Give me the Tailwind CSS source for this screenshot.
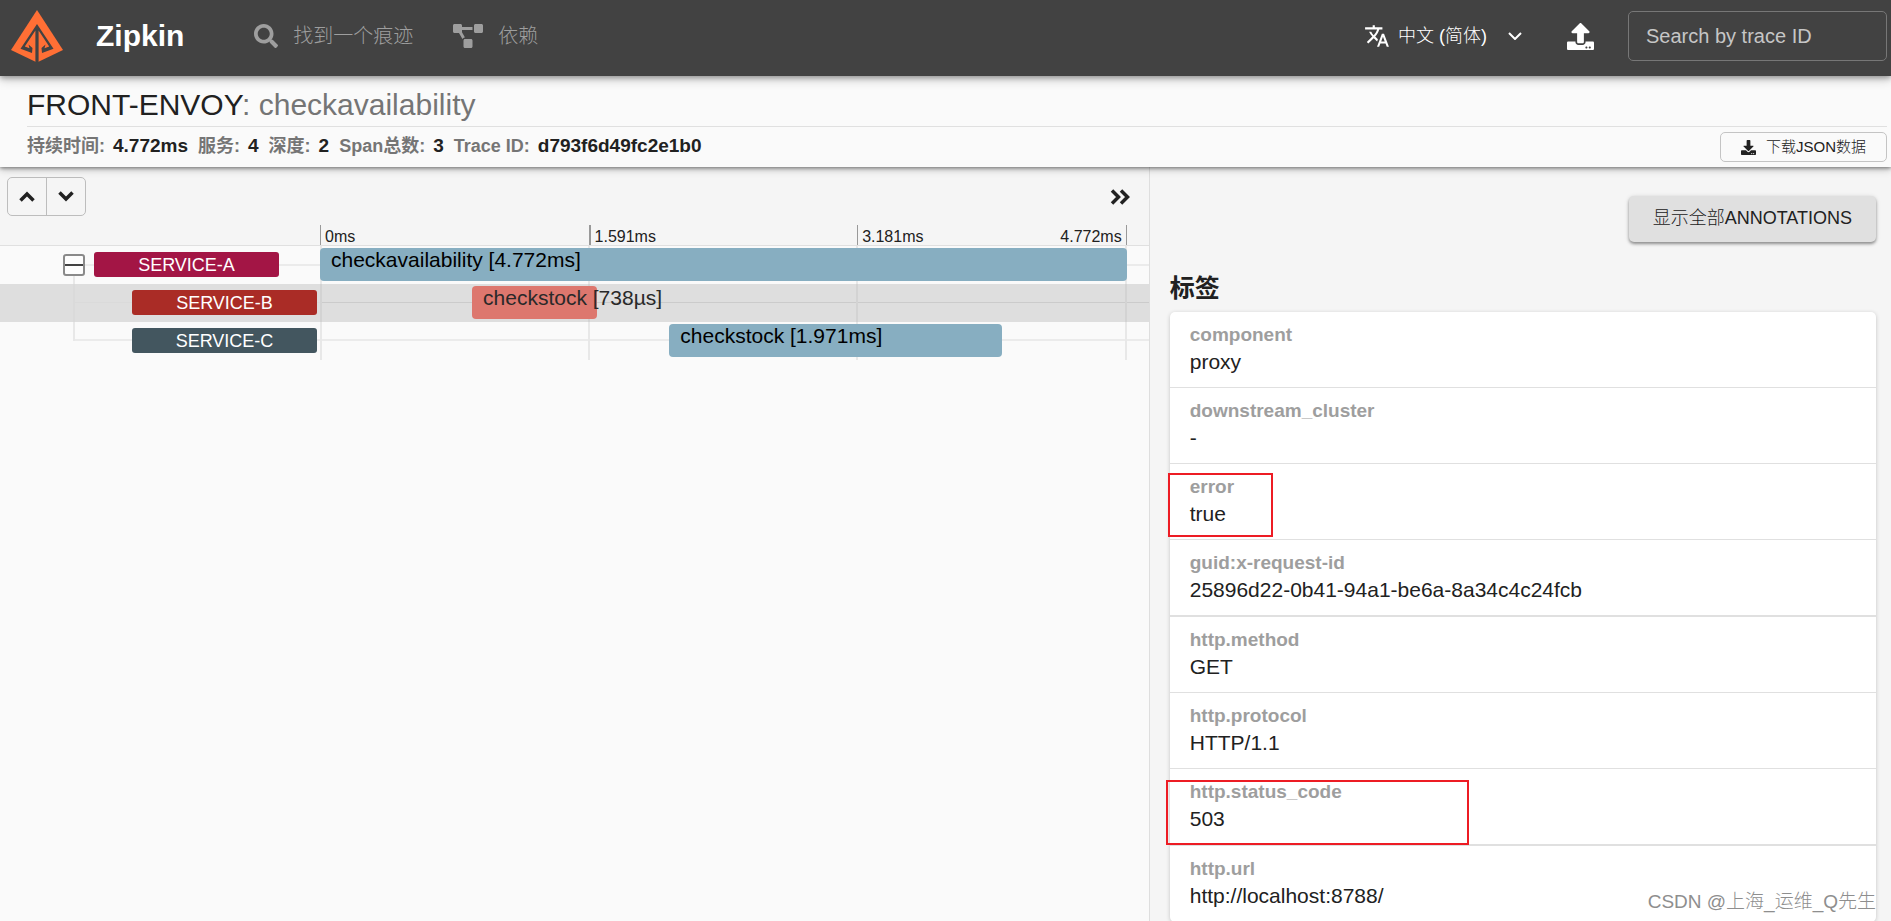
<!DOCTYPE html>
<html lang="zh-CN">
<head>
<meta charset="utf-8">
<title>Zipkin</title>
<script src="https://cdn.jsdelivr.net/npm/@tailwindcss/browser@4"></script>
</head>
<body class="flex h-screen flex-col overflow-hidden bg-[#fafafa] font-['Liberation_Sans','Noto_Sans_CJK_SC',sans-serif] text-[#212121]">

<header class="relative z-20 flex h-[76px] shrink-0 items-center bg-[#424242] pr-1 pb-1 pl-[11px] shadow-[0_2px_5px_rgba(0,0,0,0.3),0_4px_10px_rgba(0,0,0,0.18)]">
  <a href="#" class="flex items-center text-white">
    <svg class="h-[52px] w-[52px]" viewBox="0 0 52 52" aria-hidden="true">
      <path fill="#ff6f35" d="M26 0 52 40 27 52H25L0 40Z"/>
      <path fill="#424242" d="M26 14 9.500 38.800 21 43 21.500 38 17.500 34.500 18.500 38.200 13.800 36.600 24.400 20.500V52H27.600V20.500L38.200 36.600 33.500 38.200 34.500 34.500 30.500 38 31 43 42.500 38.800Z"/>
    </svg>
    <span class="ml-[33px] text-[30px] leading-9 font-bold">Zipkin</span>
  </a>
  <nav class="ml-[70px] flex items-center text-xl leading-7 font-light text-[#9e9e9e]">
    <a href="#" class="flex items-center gap-[15px]">
      <svg class="h-6 w-6" viewBox="0 0 512 512" fill="currentColor" aria-hidden="true"><path d="M505 442.700 405.300 343c-4.500-4.500-10.600-7-17-7H372c27.600-35.300 44-79.700 44-128C416 93.100 322.900 0 208 0S0 93.100 0 208s93.100 208 208 208c48.300 0 92.700-16.400 128-44v16.300c0 6.400 2.500 12.500 7 17l99.700 99.700c9.400 9.400 24.600 9.400 33.900 0l28.300-28.300c9.400-9.400 9.400-24.600.1-34zM208 336c-70.700 0-128-57.200-128-128 0-70.700 57.200-128 128-128 70.700 0 128 57.200 128 128 0 70.700-57.200 128-128 128z"/></svg>
      <span>找到一个痕迹</span>
    </a>
    <a href="#" class="ml-10 flex items-center gap-[15px]">
      <svg class="h-6 w-[30px]" viewBox="0 0 640 512" fill="currentColor" aria-hidden="true"><path d="M384 320H256c-17.700 0-32 14.300-32 32v128c0 17.700 14.300 32 32 32h128c17.700 0 32-14.300 32-32V352c0-17.700-14.300-32-32-32zM192 32c0-17.700-14.300-32-32-32H32C14.300 0 0 14.300 0 32v128c0 17.700 14.300 32 32 32h95.700l73.200 128C212 301 232.400 288 256 288h.3L192 175.500V128h224V64H192V32zM608 0H480c-17.700 0-32 14.300-32 32v128c0 17.700 14.300 32 32 32h128c17.700 0 32-14.300 32-32V32c0-17.700-14.300-32-32-32z"/></svg>
      <span>依赖</span>
    </a>
  </nav>
  <div class="ml-auto flex items-center text-white">
    <svg class="h-[26px] w-[26px]" viewBox="0 0 24 24" fill="currentColor" aria-hidden="true"><path d="M12.870 15.070l-2.540-2.510.03-.03c1.740-1.940 2.980-4.170 3.710-6.530H17V4h-7V2H8v2H1v1.990h11.170C11.500 7.920 10.440 9.750 9 11.350 8.070 10.320 7.300 9.190 6.690 8h-2c.73 1.630 1.730 3.170 2.980 4.560l-5.090 5.020L4 19l5-5 3.110 3.110.76-2.040zM18.500 10h-2L12 22h2l1.120-3h4.750L21 22h2l-4.500-12zm-2.620 7l1.620-4.330L19.120 17h-3.240z"/></svg>
    <div class="relative ml-2">
      <select aria-label="语言" class="h-8 w-[124px] appearance-none bg-transparent pr-6 text-lg leading-8 font-light outline-none"><option>中文 (简体)</option></select>
      <svg class="pointer-events-none absolute top-3 right-0 h-2 w-[14px]" viewBox="0 0 14 8" fill="none" stroke="currentColor" stroke-width="2" aria-hidden="true"><path d="M1 1l6 6 6-6"/></svg>
    </div>
    <button type="button" aria-label="上传" class="ml-[45px]">
      <svg class="h-[27px] w-[27px]" viewBox="0 0 512 512" fill="currentColor" aria-hidden="true"><path d="M296 384h-80c-13.300 0-24-10.700-24-24V192h-87.700c-17.800 0-26.700-21.500-14.100-34.100L242.300 5.700c7.500-7.500 19.800-7.500 27.300 0l152.200 152.200c12.600 12.600 3.700 34.100-14.100 34.100H320v168c0 13.300-10.700 24-24 24zm216-8v112c0 13.300-10.700 24-24 24H24c-13.300 0-24-10.700-24-24V376c0-13.300 10.700-24 24-24h136v8c0 30.900 25.100 56 56 56h80c30.900 0 56-25.100 56-56v-8h136c13.300 0 24 10.700 24 24zm-124 88c0-11-9-20-20-20s-20 9-20 20 9 20 20 20 20-9 20-20zm64 0c0-11-9-20-20-20s-20 9-20 20 9 20 20 20 20-9 20-20z"/></svg>
    </button>
    <input type="text" aria-label="Search by trace ID" placeholder="Search by trace ID" class="ml-[34px] h-[50px] w-[259px] rounded-[5px] border border-[#777] bg-transparent px-[17px] text-xl placeholder:text-[#c6c6c6]">
  </div>
</header>

<section class="relative z-10 shrink-0 bg-[#fafafa] pt-[11px] pr-1 pl-[27px] shadow-[0_1px_4px_rgba(0,0,0,0.5),0_3px_8px_rgba(0,0,0,0.16)]">
  <h1 class="h-[39px] text-[30px] leading-9">FRONT-ENVOY<span class="text-[#757575]">: checkavailability</span></h1>
  <div class="flex h-[41px] items-center justify-between border-t border-[#e0e0e0]">
    <dl class="flex gap-[10px] pb-[3px] text-lg leading-6 font-bold text-[#757575]">
      <div class="flex gap-2"><dt>持续时间:</dt><dd class="text-[19px] text-[#212121]">4.772ms</dd></div>
      <div class="flex gap-2"><dt>服务:</dt><dd class="text-[19px] text-[#212121]">4</dd></div>
      <div class="flex gap-2"><dt>深度:</dt><dd class="text-[19px] text-[#212121]">2</dd></div>
      <div class="flex gap-2"><dt>Span总数:</dt><dd class="text-[19px] text-[#212121]">3</dd></div>
      <div class="flex gap-2"><dt>Trace ID:</dt><dd class="text-[19px] text-[#212121]">d793f6d49fc2e1b0</dd></div>
    </dl>
    <button type="button" class="flex h-[30px] items-center gap-[10px] rounded-[5px] border border-[#c4c4c4] px-5 text-[15px] leading-5 font-light">
      <svg class="h-[15px] w-[15px]" viewBox="0 0 512 512" fill="currentColor" aria-hidden="true"><path d="M216 0h80c13.300 0 24 10.700 24 24v168h87.700c17.800 0 26.700 21.500 14.100 34.100L269.700 378.300c-7.500 7.500-19.800 7.500-27.300 0L90.100 226.100c-12.600-12.600-3.700-34.100 14.100-34.100H192V24c0-13.300 10.700-24 24-24zm296 376v112c0 13.300-10.700 24-24 24H24c-13.300 0-24-10.700-24-24V376c0-13.300 10.700-24 24-24h146.700l49 49c20.100 20.100 52.500 20.100 72.600 0l49-49H488c13.300 0 24 10.700 24 24zm-124 88c0-11-9-20-20-20s-20 9-20 20 9 20 20 20 20-9 20-20zm64 0c0-11-9-20-20-20s-20 9-20 20 9 20 20 20 20-9 20-20z"/></svg>
      <span>下载JSON数据</span>
    </button>
  </div>
</section>

<main class="flex min-h-0 flex-1">
  <section class="flex w-[60.8%] shrink-0 flex-col border-r border-[#dedede]" aria-label="Trace timeline">
    <div class="flex items-start justify-between bg-[#f5f5f5] pt-[10px] pr-[19px] pl-[7px]">
      <div class="flex h-[39px] rounded-[5px] border border-[#bdbdbd]">
        <button type="button" aria-label="上一个" class="flex w-[39px] items-center justify-center border-r border-[#bdbdbd]"><svg class="h-[11px] w-4" viewBox="0 0 16 11" fill="none" stroke="currentColor" stroke-width="3.500" aria-hidden="true"><path d="M1.500 9.500 8 3l6.500 6.500"/></svg></button>
        <button type="button" aria-label="下一个" class="flex w-[38px] items-center justify-center"><svg class="h-[11px] w-4" viewBox="0 0 16 11" fill="none" stroke="currentColor" stroke-width="3.500" aria-hidden="true"><path d="M1.500 1.500 8 8l6.500-6.500"/></svg></button>
      </div>
      <button type="button" aria-label="展开" class="mt-3"><svg class="h-4 w-5" viewBox="0 0 20 16" fill="none" stroke="currentColor" stroke-width="3.500" aria-hidden="true"><path d="M2 1.500 8.500 8 2 14.500M11 1.500 17.500 8 11 14.500"/></svg></button>
    </div>
    <div class="flex h-[30px] items-end border-b border-[#e0e0e0] bg-[#f5f5f5] pr-[22px] pl-80 text-base leading-[18px]">
      <div class="flex h-5 flex-1 border-r border-[#999]">
        <div class="w-1/3 border-l border-[#999] pt-[3px] pl-1">0ms</div>
        <div class="w-1/3 border-l-2 border-[#999] pt-[3px] pl-1">1.591ms</div>
        <div class="flex w-1/3 justify-between border-l border-[#999] pt-[3px] pr-1 pl-1"><span>3.181ms</span><span>4.772ms</span></div>
      </div>
    </div>

    <div>
      <div class="relative flex h-[38px]">
        <div class="relative w-80 shrink-0">
          <div class="absolute top-[18px] right-0 left-[73px] h-0.5 bg-[#ebebeb]"></div>
          <div class="absolute top-[19px] bottom-0 left-[73px] w-0.5 bg-[#e8e8e8]"></div>
          <button type="button" aria-label="折叠" class="absolute top-2 left-[63px] flex h-[22px] w-[22px] items-center rounded-[3px] border-2 border-[#8a8a8a] bg-[#fdfdfd]"><span class="h-0.5 w-full bg-[#424242]"></span></button>
          <div class="absolute top-[6px] left-[94px] h-[25px] w-[185px] rounded-[3px] bg-[#a31545] text-center text-lg leading-[26px] text-white">SERVICE-A</div>
        </div>
        <div class="relative mr-[22px] flex-1">
          <div class="absolute top-[18px] right-[-22px] left-0 h-0.5 bg-[#ebebeb]"></div>
          <div class="absolute inset-0 flex border-r-2 border-[#e8e8e8]"><i class="w-1/3 border-l-2 border-[#e8e8e8]"></i><i class="w-1/3 border-l-2 border-[#e8e8e8]"></i><i class="w-1/3 border-l-2 border-[#e8e8e8]"></i></div>
          <div class="absolute top-[2px] h-[33px] rounded-[4px] bg-[#87aec1] pl-[11px] text-[21px] leading-[23px] whitespace-nowrap text-black" style="left:0%;width:100%">checkavailability [4.772ms]</div>
        </div>
      </div>

      <div class="relative flex h-[38px] bg-[#dedede]">
        <div class="relative w-80 shrink-0">
          <div class="absolute top-[18px] right-0 left-[73px] h-px bg-[#dadada]"></div>
          <div class="absolute top-0 bottom-0 left-[73px] w-0.5 bg-[#dadada]"></div>
          <div class="absolute top-[6px] left-[132px] h-[25px] w-[185px] rounded-[3px] bg-[#aa2c26] text-center text-lg leading-[26px] text-white">SERVICE-B</div>
        </div>
        <div class="relative mr-[22px] flex-1">
          <div class="absolute top-[18px] right-[-22px] left-0 h-px bg-[#cbcbcb]"></div>
          <div class="absolute inset-0 flex border-r-2 border-[#d3d3d3]"><i class="w-1/3 border-l-2 border-[#d3d3d3]"></i><i class="w-1/3 border-l-2 border-[#d3d3d3]"></i><i class="w-1/3 border-l-2 border-[#d3d3d3]"></i></div>
          <div class="absolute top-[2px] h-[33px] rounded-[4px] bg-[#dd776e] pl-[11px] text-[21px] leading-[23px] whitespace-nowrap text-[#292929]" style="left:18.850%;width:15.470%">checkstock [738µs]</div>
        </div>
      </div>

      <div class="relative flex h-[38px]">
        <div class="relative w-80 shrink-0">
          <div class="absolute top-[17px] right-0 left-[73px] h-0.5 bg-[#ebebeb]"></div>
          <div class="absolute top-0 left-[73px] h-[19px] w-0.5 bg-[#e8e8e8]"></div>
          <div class="absolute top-[6px] left-[132px] h-[25px] w-[185px] rounded-[3px] bg-[#43565f] text-center text-lg leading-[26px] text-white">SERVICE-C</div>
        </div>
        <div class="relative mr-[22px] flex-1">
          <div class="absolute top-[17px] right-[-22px] left-0 h-0.5 bg-[#ebebeb]"></div>
          <div class="absolute inset-0 flex border-r-2 border-[#e8e8e8]"><i class="w-1/3 border-l-2 border-[#e8e8e8]"></i><i class="w-1/3 border-l-2 border-[#e8e8e8]"></i><i class="w-1/3 border-l-2 border-[#e8e8e8]"></i></div>
          <div class="absolute top-[2px] h-[33px] rounded-[4px] bg-[#87aec1] pl-[11px] text-[21px] leading-[23px] whitespace-nowrap text-black" style="left:43.300%;width:41.300%">checkstock [1.971ms]</div>
        </div>
      </div>
    </div>
  </section>

  <aside class="min-w-0 flex-1 overflow-hidden bg-[#f5f5f5] pt-[29px] pr-[15px] pl-5">
    <div class="flex justify-end">
      <button type="button" class="h-[46px] rounded-[5px] bg-[#e0e0e0] px-6 pb-0.5 text-lg leading-6 shadow-[0_2px_3px_rgba(0,0,0,0.35),0_1px_5px_rgba(0,0,0,0.15)]"><span class="font-light">显示全部</span>ANNOTATIONS</button>
    </div>
    <h2 class="mt-7 text-[25px] leading-9 font-bold">标签</h2>
    <dl class="mt-1.5 rounded-[5px] bg-white text-[21px] leading-[30px] shadow-[0_1px_4px_rgba(0,0,0,0.2)]">
      <div class="border-b border-[#e0e0e0] px-5 pt-[11px] pb-[10px]"><dt class="text-[19px] leading-6 font-bold text-[#9e9e9e]">component</dt><dd>proxy</dd></div>
      <div class="border-b border-[#e0e0e0] px-5 pt-[11px] pb-[10px]"><dt class="text-[19px] leading-6 font-bold text-[#9e9e9e]">downstream_cluster</dt><dd>-</dd></div>
      <div class="relative border-b border-[#e0e0e0] px-5 pt-[11px] pb-[10px]"><dt class="text-[19px] leading-6 font-bold text-[#9e9e9e]">error</dt><dd>true</dd><div class="absolute top-[9px] left-[-2px] h-16 w-[105px] border-2 border-[#ed1c24]"></div></div>
      <div class="border-b-2 border-[#e0e0e0] px-5 pt-[11px] pb-[10px]"><dt class="text-[19px] leading-6 font-bold text-[#9e9e9e]">guid:x-request-id</dt><dd>25896d22-0b41-94a1-be6a-8a34c4c24fcb</dd></div>
      <div class="border-b border-[#e0e0e0] px-5 pt-[11px] pb-[10px]"><dt class="text-[19px] leading-6 font-bold text-[#9e9e9e]">http.method</dt><dd>GET</dd></div>
      <div class="border-b border-[#e0e0e0] px-5 pt-[11px] pb-[10px]"><dt class="text-[19px] leading-6 font-bold text-[#9e9e9e]">http.protocol</dt><dd>HTTP/1.1</dd></div>
      <div class="relative border-b-2 border-[#e0e0e0] px-5 pt-[11px] pb-[10px]"><dt class="text-[19px] leading-6 font-bold text-[#9e9e9e]">http.status_code</dt><dd>503</dd><div class="absolute top-[11px] left-[-4px] h-[65px] w-[303px] border-2 border-[#ed1c24]"></div></div>
      <div class="border-b border-[#e0e0e0] px-5 pt-[11px] pb-[10px]"><dt class="text-[19px] leading-6 font-bold text-[#9e9e9e]">http.url</dt><dd>http://localhost:8788/</dd></div>
    </dl>
  </aside>
</main>

<div class="pointer-events-none absolute right-[15px] bottom-[7px] z-30 text-[19px] leading-6 font-light text-[#8e8e8e]">CSDN @上海_运维_Q先生</div>
</body>
</html>
